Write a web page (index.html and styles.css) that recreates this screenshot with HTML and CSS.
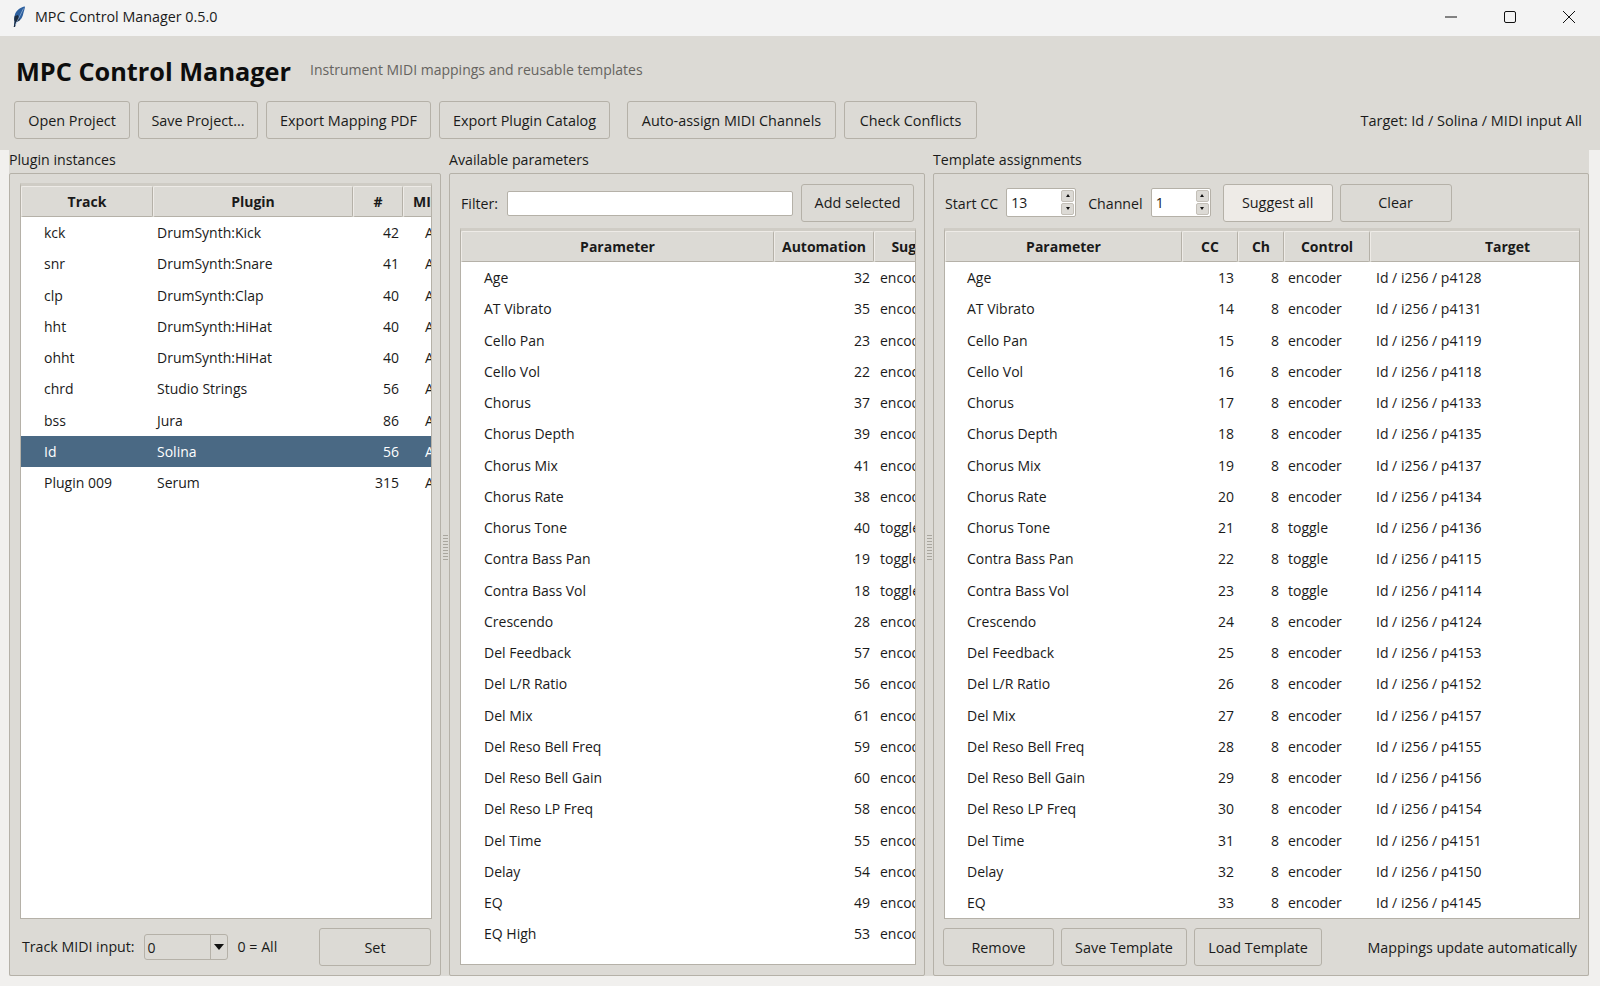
FILE: index.html
```html
<!DOCTYPE html>
<html lang="en">
<head>
  <meta charset="UTF-8">
  <title>MPC Control Manager 0.5.0</title>
  <link rel="stylesheet" href="styles.css">
</head>
<body>

  <div class="titlebar">
    <svg class="feather" width="14" height="22" viewBox="0 0 14 22">
      <path d="M13 0.5C8.5 1 4 4.5 2.8 9C2.1 11.5 2 13.5 2.6 15.5L1.8 21L3 21L4 16C8 15.5 10.3 12 11.2 8C11.9 5 12.9 2.5 13 0.5Z" fill="#2c5f9e"/>
      <path d="M2.8 10C2.2 12 2 14 2.6 15.5L1.8 21L3 21L4 16C5.5 15.8 6.8 15 7.8 14L6 9Z" fill="#1c2c40"/>
      <path d="M11.5 2.5L3.4 19" stroke="#9db8d8" stroke-width="0.7" fill="none"/>
    </svg>
    <span class="window-title">MPC Control Manager 0.5.0</span>
    <div class="window-buttons">
      <svg width="14" height="14" viewBox="0 0 14 14"><path d="M1 7H13" stroke="#111" fill="none"/></svg>
      <svg width="14" height="14" viewBox="0 0 14 14"><rect x="1.5" y="1.5" width="11" height="11" rx="1.5" stroke="#111" fill="none"/></svg>
      <svg width="14" height="14" viewBox="0 0 14 14"><path d="M1 1L13 13M13 1L1 13" stroke="#111" fill="none"/></svg>
    </div>
  </div>

  <div class="top">
    <div class="heading">
      <h1>MPC Control Manager</h1>
      <span class="subtitle">Instrument MIDI mappings and reusable templates</span>
    </div>
    <div class="toolbar">
      <button class="btn w-open">Open Project</button>
      <button class="btn w-save">Save Project...</button>
      <button class="btn w-pdf">Export Mapping PDF</button>
      <button class="btn w-catalog">Export Plugin Catalog</button>
      <button class="btn w-auto">Auto-assign MIDI Channels</button>
      <button class="btn w-check">Check Conflicts</button>
      <span class="target">Target: Id / Solina / MIDI input All</span>
    </div>
  </div>

  <div class="panes">

    <section class="pane pane-left">
      <div class="pane-title">Plugin instances</div>
      <div class="panel">
        <div class="tree tree-plugins">
          <div class="row head"><span>Track</span><span>Plugin</span><span>#</span><span>MIDI input</span></div>
          <div class="row"><span>kck</span><span>DrumSynth:Kick</span><span class="num">42</span><span>All</span></div>
          <div class="row"><span>snr</span><span>DrumSynth:Snare</span><span class="num">41</span><span>All</span></div>
          <div class="row"><span>clp</span><span>DrumSynth:Clap</span><span class="num">40</span><span>All</span></div>
          <div class="row"><span>hht</span><span>DrumSynth:HiHat</span><span class="num">40</span><span>All</span></div>
          <div class="row"><span>ohht</span><span>DrumSynth:HiHat</span><span class="num">40</span><span>All</span></div>
          <div class="row"><span>chrd</span><span>Studio Strings</span><span class="num">56</span><span>All</span></div>
          <div class="row"><span>bss</span><span>Jura</span><span class="num">86</span><span>All</span></div>
          <div class="row selected"><span>Id</span><span>Solina</span><span class="num">56</span><span>All</span></div>
          <div class="row"><span>Plugin 009</span><span>Serum</span><span class="num">315</span><span>All</span></div>
        </div>
        <div class="bar bar-midi">
          <span class="lbl">Track MIDI input:</span>
          <div class="combo"><span>0</span><i class="combo-arrow"></i></div>
          <span class="lbl all">0 = All</span>
          <button class="btn w-set">Set</button>
        </div>
      </div>
    </section>

    <div class="sash"><i class="grip"></i></div>

    <section class="pane pane-mid">
      <div class="pane-title">Available parameters</div>
      <div class="panel">
        <div class="bar bar-filter">
          <span class="lbl">Filter:</span>
          <input class="entry" type="text">
          <button class="btn w-add">Add selected</button>
        </div>
        <div class="tree tree-params">
          <div class="row head"><span>Parameter</span><span>Automation</span><span>Suggested</span></div>
          <div class="row"><span>Age</span><span class="num">32</span><span>encoder</span></div>
          <div class="row"><span>AT Vibrato</span><span class="num">35</span><span>encoder</span></div>
          <div class="row"><span>Cello Pan</span><span class="num">23</span><span>encoder</span></div>
          <div class="row"><span>Cello Vol</span><span class="num">22</span><span>encoder</span></div>
          <div class="row"><span>Chorus</span><span class="num">37</span><span>encoder</span></div>
          <div class="row"><span>Chorus Depth</span><span class="num">39</span><span>encoder</span></div>
          <div class="row"><span>Chorus Mix</span><span class="num">41</span><span>encoder</span></div>
          <div class="row"><span>Chorus Rate</span><span class="num">38</span><span>encoder</span></div>
          <div class="row"><span>Chorus Tone</span><span class="num">40</span><span>toggle</span></div>
          <div class="row"><span>Contra Bass Pan</span><span class="num">19</span><span>toggle</span></div>
          <div class="row"><span>Contra Bass Vol</span><span class="num">18</span><span>toggle</span></div>
          <div class="row"><span>Crescendo</span><span class="num">28</span><span>encoder</span></div>
          <div class="row"><span>Del Feedback</span><span class="num">57</span><span>encoder</span></div>
          <div class="row"><span>Del L/R Ratio</span><span class="num">56</span><span>encoder</span></div>
          <div class="row"><span>Del Mix</span><span class="num">61</span><span>encoder</span></div>
          <div class="row"><span>Del Reso Bell Freq</span><span class="num">59</span><span>encoder</span></div>
          <div class="row"><span>Del Reso Bell Gain</span><span class="num">60</span><span>encoder</span></div>
          <div class="row"><span>Del Reso LP Freq</span><span class="num">58</span><span>encoder</span></div>
          <div class="row"><span>Del Time</span><span class="num">55</span><span>encoder</span></div>
          <div class="row"><span>Delay</span><span class="num">54</span><span>encoder</span></div>
          <div class="row"><span>EQ</span><span class="num">49</span><span>encoder</span></div>
          <div class="row"><span>EQ High</span><span class="num">53</span><span>encoder</span></div>
        </div>
      </div>
    </section>

    <div class="sash"><i class="grip"></i></div>

    <section class="pane pane-right">
      <div class="pane-title">Template assignments</div>
      <div class="panel">
        <div class="bar bar-assign">
          <span class="lbl">Start CC</span>
          <div class="spin spin-cc"><span>13</span><div class="spin-btns"><i class="up"></i><i class="down"></i></div></div>
          <span class="lbl channel">Channel</span>
          <div class="spin spin-ch"><span>1</span><div class="spin-btns"><i class="up"></i><i class="down"></i></div></div>
          <button class="btn w-suggest hover">Suggest all</button>
          <button class="btn w-clear">Clear</button>
        </div>
        <div class="tree tree-assign">
          <div class="row head"><span>Parameter</span><span>CC</span><span>Ch</span><span>Control</span><span>Target</span></div>
          <div class="row"><span>Age</span><span class="num">13</span><span class="num">8</span><span>encoder</span><span>Id / i256 / p4128</span></div>
          <div class="row"><span>AT Vibrato</span><span class="num">14</span><span class="num">8</span><span>encoder</span><span>Id / i256 / p4131</span></div>
          <div class="row"><span>Cello Pan</span><span class="num">15</span><span class="num">8</span><span>encoder</span><span>Id / i256 / p4119</span></div>
          <div class="row"><span>Cello Vol</span><span class="num">16</span><span class="num">8</span><span>encoder</span><span>Id / i256 / p4118</span></div>
          <div class="row"><span>Chorus</span><span class="num">17</span><span class="num">8</span><span>encoder</span><span>Id / i256 / p4133</span></div>
          <div class="row"><span>Chorus Depth</span><span class="num">18</span><span class="num">8</span><span>encoder</span><span>Id / i256 / p4135</span></div>
          <div class="row"><span>Chorus Mix</span><span class="num">19</span><span class="num">8</span><span>encoder</span><span>Id / i256 / p4137</span></div>
          <div class="row"><span>Chorus Rate</span><span class="num">20</span><span class="num">8</span><span>encoder</span><span>Id / i256 / p4134</span></div>
          <div class="row"><span>Chorus Tone</span><span class="num">21</span><span class="num">8</span><span>toggle</span><span>Id / i256 / p4136</span></div>
          <div class="row"><span>Contra Bass Pan</span><span class="num">22</span><span class="num">8</span><span>toggle</span><span>Id / i256 / p4115</span></div>
          <div class="row"><span>Contra Bass Vol</span><span class="num">23</span><span class="num">8</span><span>toggle</span><span>Id / i256 / p4114</span></div>
          <div class="row"><span>Crescendo</span><span class="num">24</span><span class="num">8</span><span>encoder</span><span>Id / i256 / p4124</span></div>
          <div class="row"><span>Del Feedback</span><span class="num">25</span><span class="num">8</span><span>encoder</span><span>Id / i256 / p4153</span></div>
          <div class="row"><span>Del L/R Ratio</span><span class="num">26</span><span class="num">8</span><span>encoder</span><span>Id / i256 / p4152</span></div>
          <div class="row"><span>Del Mix</span><span class="num">27</span><span class="num">8</span><span>encoder</span><span>Id / i256 / p4157</span></div>
          <div class="row"><span>Del Reso Bell Freq</span><span class="num">28</span><span class="num">8</span><span>encoder</span><span>Id / i256 / p4155</span></div>
          <div class="row"><span>Del Reso Bell Gain</span><span class="num">29</span><span class="num">8</span><span>encoder</span><span>Id / i256 / p4156</span></div>
          <div class="row"><span>Del Reso LP Freq</span><span class="num">30</span><span class="num">8</span><span>encoder</span><span>Id / i256 / p4154</span></div>
          <div class="row"><span>Del Time</span><span class="num">31</span><span class="num">8</span><span>encoder</span><span>Id / i256 / p4151</span></div>
          <div class="row"><span>Delay</span><span class="num">32</span><span class="num">8</span><span>encoder</span><span>Id / i256 / p4150</span></div>
          <div class="row"><span>EQ</span><span class="num">33</span><span class="num">8</span><span>encoder</span><span>Id / i256 / p4145</span></div>
        </div>
        <div class="bar bar-template">
          <button class="btn w-remove">Remove</button>
          <button class="btn w-savet">Save Template</button>
          <button class="btn w-loadt">Load Template</button>
          <span class="lbl auto-note">Mappings update automatically</span>
        </div>
      </div>
    </section>

  </div>

</body>
</html>
```

FILE: styles.css
```css
* {
  box-sizing: border-box;
}
html, body {
  height: 100%;
}
body {
  margin: 0;
  overflow: hidden;
  background-color: #f1f0ee;
  color: #1a1a1a;
  font-family: "Open Sans", "Noto Sans", sans-serif;
  font-size: 14px;
}

/* window chrome */
.titlebar {
  height: 36px;
  display: flex;
  align-items: center;
  padding: 0 0 2px 12px;
  background-color: #f3f3f3;
}
.feather {
  margin-right: 9px;
}
.window-title {
  font-size: 14.3px;
  margin-bottom: 2px;
}
.window-buttons {
  margin-left: auto;
  display: flex;
  gap: 45px;
  padding-right: 24px;
}

/* header area */
.top {
  height: 114px;
  padding: 0 18px 0 14px;
  background-color: #dcdad5;
}
.heading {
  height: 65px;
  padding: 5px 0 0 2px;
  display: flex;
  align-items: center;
  gap: 19px;
}
h1 {
  margin: 0;
  font-size: 25.3px;
  font-weight: 700;
  color: #0d0d0d;
}
.subtitle {
  color: #66645f;
  font-size: 14px;
  padding-bottom: 4px;
}
.toolbar {
  display: flex;
  align-items: center;
  gap: 8px;
}
.target {
  margin-left: auto;
  font-size: 14.5px;
}

.btn {
  height: 38px;
  padding: 0;
  border: 1px solid #b5b1a8;
  border-radius: 3px;
  background-color: #dcdad5;
  color: #1a1a1a;
  font: inherit;
  font-size: 14.4px;
}
.btn.hover {
  background-color: #eeebe7;
}
.w-open { width: 116px; }
.w-save { width: 120px; }
.w-pdf { width: 165px; }
.w-catalog { width: 171px; }
.w-auto { width: 209px; margin-left: 9px; }
.w-check { width: 133px; }
.w-set { width: 112px; margin-left: auto; }
.w-add { width: 113px; margin-left: 8px; }
.w-suggest { width: 110px; margin-left: 12px; }
.w-clear { width: 112px; margin-left: 7px; }
.w-remove { width: 111px; }
.w-savet { width: 126px; margin-left: 7px; }
.w-loadt { width: 128px; margin-left: 7px; }

/* panes */
.panes {
  height: 836px;
  padding: 0 11px 0 9px;
  display: flex;
  background: linear-gradient(#dcdad5, #dcdad5) no-repeat 9px 0 / 1580px 826px;
}
.pane {
  display: flex;
  flex-direction: column;
  height: 826px;
}
.pane-left { width: 432px; }
.pane-mid { width: 476px; }
.pane-right { width: 656px; }
.pane-title {
  height: 23px;
  line-height: 19px;
  font-size: 14.2px;
}
.panel {
  flex: 1;
  display: flex;
  flex-direction: column;
  border: 1px solid #b5b1a8;
  border-radius: 2px;
  min-height: 0;
}
.sash {
  width: 8px;
  display: flex;
  align-items: center;
  justify-content: center;
}
.grip {
  display: block;
  width: 5px;
  height: 26px;
  margin-top: -40px;
  background: repeating-linear-gradient(#a9a69e 0 1px, #dcdad5 1px 3px);
}

.lbl {
  white-space: nowrap;
  font-size: 14.2px;
}

/* control rows */
.bar {
  display: flex;
  align-items: center;
  flex: none;
}
.bar-midi {
  height: 56px;
  padding: 0 9px 0 12px;
}
.bar-midi .lbl {
  margin-bottom: 2px;
}
.bar-filter,
.bar-assign {
  height: 47px;
  margin: 5px 0 2px;
  padding: 0 9px 0 11px;
}
.bar-filter .lbl,
.bar-assign .lbl {
  margin-top: 2px;
}
.bar-template {
  height: 56px;
  padding: 0 11px 0 9px;
}
.auto-note {
  margin-left: auto;
  font-size: 14.3px;
}

.combo {
  width: 84px;
  height: 26px;
  margin-left: 9px;
  padding-left: 3px;
  display: flex;
  align-items: center;
  justify-content: space-between;
  border: 1px solid #b5b1a8;
  border-radius: 3px;
  background-color: #dcdad5;
}
.combo-arrow {
  position: relative;
  width: 17px;
  height: 24px;
  border-left: 1px solid #b5b1a8;
}
.combo-arrow::after {
  content: "";
  position: absolute;
  left: 3px;
  top: 9px;
  border-left: 5px solid transparent;
  border-right: 5px solid transparent;
  border-top: 6px solid #111;
}
.all {
  margin-left: 10px;
}

.entry {
  width: 286px;
  height: 25px;
  margin: 2px 0 0 9px;
  border: 1px solid #b5b1a8;
  border-radius: 2px;
  background-color: white;
}

.spin {
  height: 29px;
  margin: -1px 0 0 8px;
  padding-left: 4px;
  display: flex;
  align-items: center;
  justify-content: space-between;
  border: 1px solid #b5b1a8;
  border-radius: 2px;
  background-color: white;
}
.spin-cc { width: 70px; }
.spin-ch { width: 60px; }
.channel { margin-left: 12px; }
.spin-btns {
  width: 13px;
  height: 25px;
  margin-right: 1px;
  display: flex;
  flex-direction: column;
  gap: 1px;
}
.spin-btns i {
  flex: 1;
  display: flex;
  align-items: center;
  justify-content: center;
  background-color: #dcdad5;
  border: 1px solid #c4c0b8;
  border-radius: 2px;
}
.spin-btns i::after {
  content: "";
  border-left: 2.5px solid transparent;
  border-right: 2.5px solid transparent;
}
.spin-btns .up::after {
  border-bottom: 3px solid #111;
}
.spin-btns .down::after {
  border-top: 3px solid #111;
}

/* treeviews */
.tree {
  flex: 1;
  min-height: 0;
  overflow: hidden;
  border: 1px solid #b5b1a8;
  border-top: 3px solid #cfccc5;
  background: white;
}
.tree-plugins {
  margin: 9px 8px 0 10px;
}
.tree-params {
  margin: 0 8px 10px 10px;
}
.tree-assign {
  margin: 0 8px 0 10px;
}
.row {
  display: grid;
  height: 31.25px;
  line-height: 31px;
  white-space: nowrap;
}
.row span {
  overflow: hidden;
  padding-left: 4px;
}
.row .num {
  padding: 0 4px 0 0;
  text-align: right;
}
.row.selected {
  background-color: #4a6984;
  color: white;
}
.tree-plugins .row {
  grid-template-columns: 132px 200px 50px 94px;
  width: 476px;
}
.tree-plugins .row span:first-child {
  padding-left: 23px;
}
.tree-plugins .row span:nth-child(2) {
  padding-left: 4px;
}
.tree-plugins .row span:last-child {
  padding-left: 22px;
}
.tree-params .row {
  grid-template-columns: 313px 100px 106px;
  width: 519px;
}
.tree-params .row span:first-child {
  padding-left: 23px;
}
.tree-params .row span:last-child {
  padding-left: 6px;
}
.tree-assign .row {
  grid-template-columns: 237px 56px 46px 86px 275px;
  width: 700px;
}
.tree-assign .row span:first-child {
  padding-left: 22px;
}
.tree-assign .row span:nth-child(3) {
  padding-right: 5px;
}
.tree-assign .row span:last-child {
  padding-left: 6px;
}
.row.head {
  height: 31px;
  line-height: 29px;
  font-weight: 700;
  background-color: #dcdad5;
}
.tree .row.head span,
.tree .row.head span:first-child,
.tree .row.head span:last-child {
  padding: 0;
  text-align: center;
  border: 1px solid #b5b1a8;
  border-top-color: #eeebe7;
  border-left-color: #eeebe7;
  border-radius: 2px;
}
```
